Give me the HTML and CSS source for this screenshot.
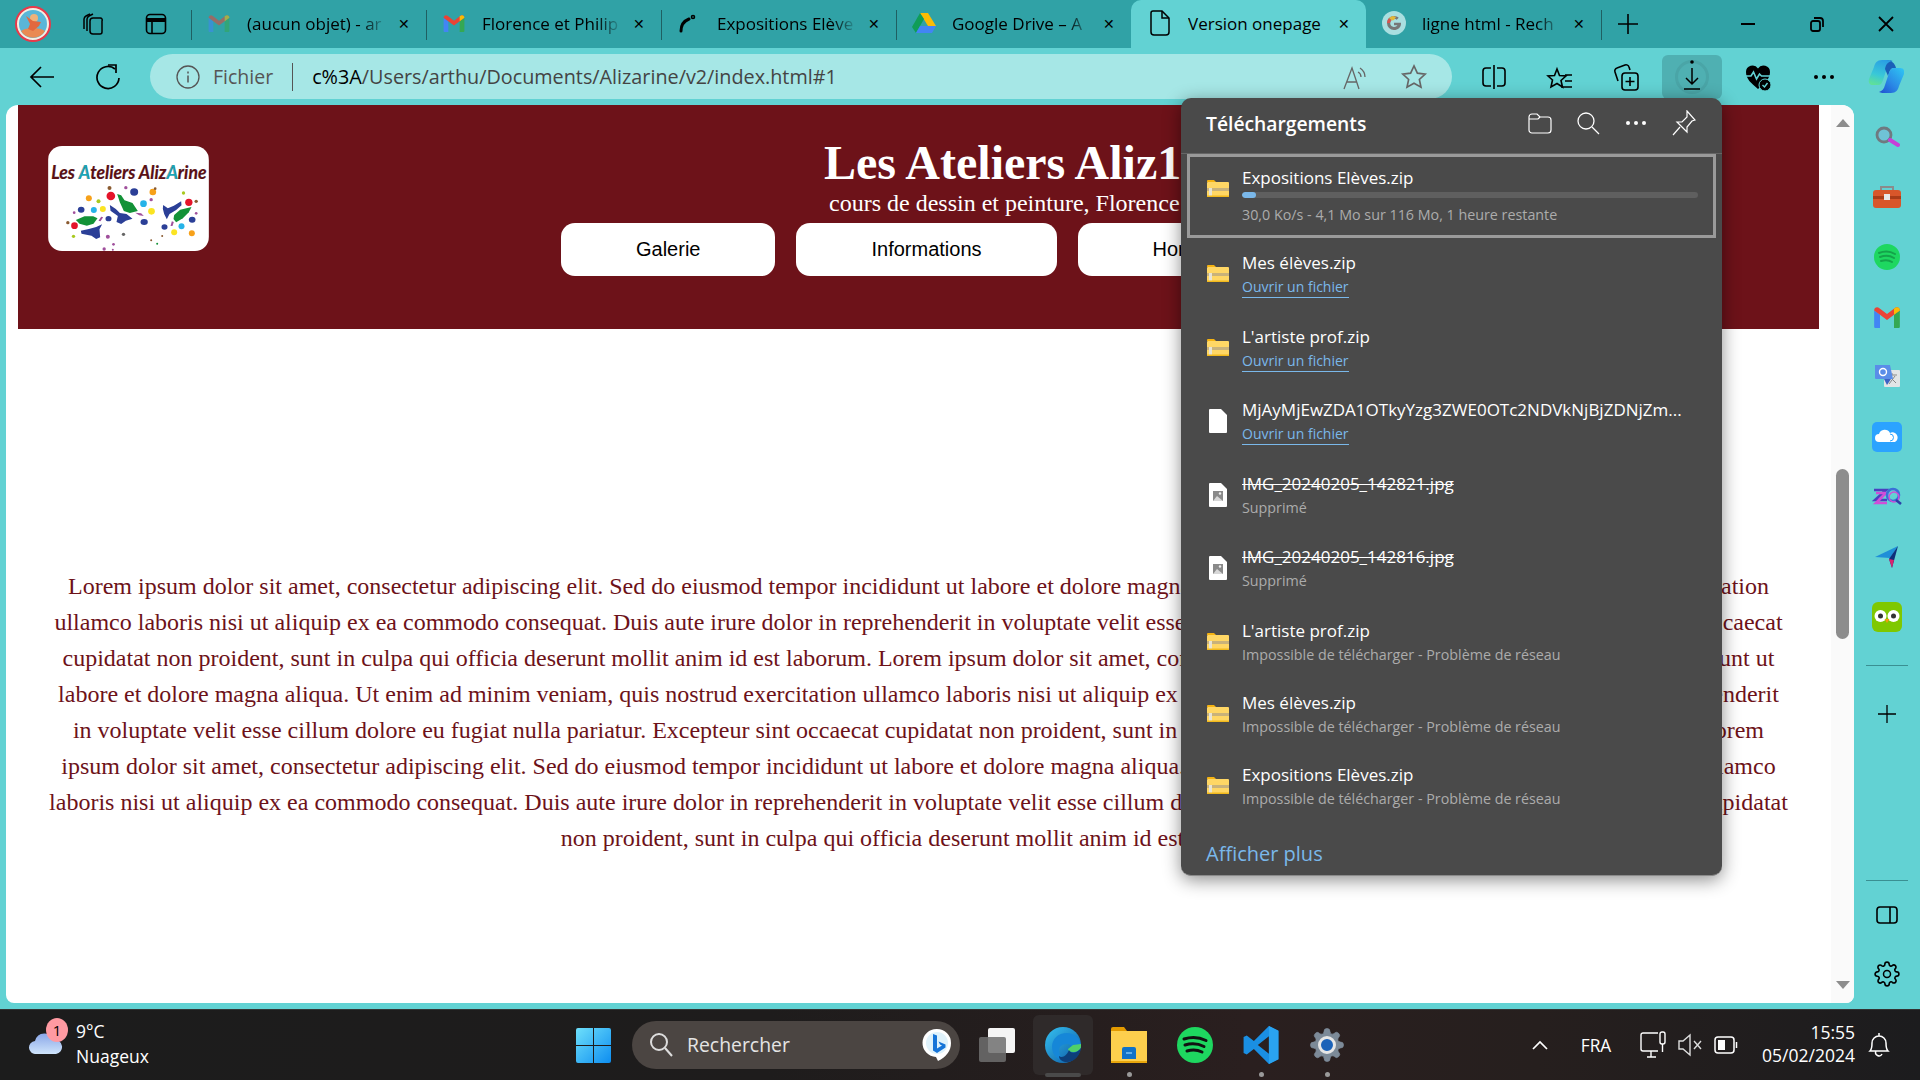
FILE: index.html
```html
<!DOCTYPE html>
<html lang="fr">
<head>
<meta charset="utf-8">
<title>Version onepage</title>
<link rel="stylesheet" href="styles.css">
</head>
<body>
<svg class="defs" width="0" height="0">
  <defs>
    <symbol id="zip" viewBox="0 0 22 18">
      <path d="M0 2a1 1 0 011-1h6l2 2H0z" fill="#f5b312"/>
      <rect x="0" y="3" width="22" height="15" rx="1" fill="#ffd765"/>
      <rect x="0" y="9" width="22" height="3" fill="#c9b27a"/>
      <rect x="2" y="9" width="3" height="9" fill="#e8e4d4"/>
      <rect x="0" y="16.5" width="22" height="1.5" fill="#f2b91c"/>
    </symbol>
    <symbol id="imgfile" viewBox="0 0 18 24">
      <path d="M1 0h11l6 6v17a1 1 0 01-1 1H1a1 1 0 01-1-1V1a1 1 0 011-1z" fill="#fff"/>
      <rect x="4" y="8" width="10" height="10" fill="#8a8a8a"/>
      <path d="M4 18l4-5 6 5z" fill="#d8d8d8"/>
      <circle cx="11" cy="10.5" r="1.2" fill="#eee"/>
    </symbol>
    <symbol id="gmail" viewBox="0 0 24 18">
      <path d="M1 18V3l5 3.5V18H2a1 1 0 01-1-1z" fill="#4285f4"/>
      <path d="M23 18V3l-5 3.5V18h4a1 1 0 001-1z" fill="#34a853"/>
      <path d="M1 3c0-2.500 2.500-3.500 4.500-2L12 6l6.500-5c2-1.500 4.500-.5 4.500 2l-5 3.700-6 4.500-6-4.500z" fill="#ea4335"/>
      <path d="M18 6.700L23 3c0-2.500-2.500-3.500-4.500-2L18 1.400z" fill="#fbbc04"/>
    </symbol>
    <symbol id="gear" viewBox="0 0 24 24">
      <path d="M19.400 15a1.650 1.650 0 00.33 1.820l.06.06a2 2 0 010 2.830 2 2 0 01-2.830 0l-.06-.06a1.650 1.650 0 00-1.820-.33 1.650 1.650 0 00-1 1.510V21a2 2 0 01-2 2 2 2 0 01-2-2v-.09A1.650 1.650 0 009 19.400a1.650 1.650 0 00-1.820.33l-.06.06a2 2 0 01-2.830 0 2 2 0 010-2.830l.06-.06a1.650 1.650 0 00.33-1.820 1.650 1.650 0 00-1.510-1H3a2 2 0 01-2-2 2 2 0 012-2h.09A1.650 1.650 0 004.600 9a1.650 1.650 0 00-.33-1.820l-.06-.06a2 2 0 010-2.830 2 2 0 012.830 0l.06.06a1.650 1.650 0 001.820.33H9a1.650 1.650 0 001-1.510V3a2 2 0 012-2 2 2 0 012 2v.09a1.650 1.650 0 001 1.510 1.650 1.650 0 001.820-.33l.06-.06a2 2 0 012.830 0 2 2 0 010 2.830l-.06.06a1.650 1.650 0 00-.33 1.820V9a1.650 1.650 0 001.510 1H21a2 2 0 012 2 2 2 0 01-2 2h-.09a1.650 1.650 0 00-1.510 1z"/>
    </symbol>
    <linearGradient id="cop1" x1="0" y1="1" x2="1" y2="0"><stop offset="0" stop-color="#1f4fd0"/><stop offset=".45" stop-color="#2a8ae6"/><stop offset="1" stop-color="#2fc8f4"/></linearGradient>
    <linearGradient id="cop2" x1=".6" y1="0" x2=".3" y2="1"><stop offset="0" stop-color="#2a9fe4"/><stop offset=".6" stop-color="#39c8d8"/><stop offset="1" stop-color="#5fe09a"/></linearGradient>
    <linearGradient id="edge1" x1="0" y1="0" x2="1" y2="1"><stop offset="0" stop-color="#35c1f1"/><stop offset="1" stop-color="#0c59a4"/></linearGradient>
    <linearGradient id="win1" x1="0" y1="0" x2="1" y2="1"><stop offset="0" stop-color="#6ee0fb"/><stop offset="1" stop-color="#0d8df0"/></linearGradient>
    <linearGradient id="cloud1" x1="0" y1="0" x2="0" y2="1"><stop offset="0" stop-color="#8aa7e8"/><stop offset="1" stop-color="#cfe4fb"/></linearGradient>
  </defs>
</svg>

<header class="tabstrip">
  <div class="strip-left">
    <svg class="avatar" viewBox="0 0 36 36"><circle cx="18" cy="18" r="17" fill="#f2f0e4" stroke="#e8394a" stroke-width="2"/><circle cx="18" cy="18" r="14" fill="#59b6d8"/><path d="M6 25c5-4 19-4 24 0a14 14 0 01-24 0z" fill="#e98a52"/><circle cx="19" cy="12" r="4" fill="#f0b27a"/><path d="M11 10l7 5 8 1-2 4-6 5-5-2 2-5z" fill="#e2683f"/></svg>
    <button class="icon-btn dark"><svg viewBox="0 0 28 28" width="28" height="28" fill="none" stroke="#000" stroke-width="1.500"><path d="M5 19V9a4 4 0 012-3l4-2"/><path d="M8 21V9a4 4 0 012-3l4-2"/><path d="M12 12a3 3 0 013-3h7a2 2 0 012 3v11a2 2 0 01-2 2h-7a3 3 0 01-3-3z" transform="translate(-1 -1)"/></svg></button>
    <button class="icon-btn dark"><svg viewBox="0 0 24 24" width="24" height="24" fill="none" stroke="#000" stroke-width="1.600"><rect x="2.500" y="2.500" width="19" height="19" rx="3.500"/><path d="M2.500 8h19" stroke-width="4"/><path d="M8 8v13.500"/></svg></button>
  </div>
  <div class="tab">
    <svg class="fav faded" width="22" height="17"><use href="#gmail"/></svg>
    <span class="tab-title">(aucun objet) - ar</span><span class="tab-x">✕</span>
  </div>
  <div class="tab">
    <svg class="fav" width="22" height="17"><use href="#gmail"/></svg>
    <span class="tab-title">Florence et Philip</span><span class="tab-x">✕</span>
  </div>
  <div class="tab">
    <svg class="fav" width="22" height="22" viewBox="0 0 22 22" fill="none" stroke="#000" stroke-width="3" stroke-linecap="round"><path d="M3 19c0-6 3-10 8-12"/><circle cx="15" cy="5" r=".8"/></svg>
    <span class="tab-title">Expositions Elève</span><span class="tab-x">✕</span>
  </div>
  <div class="tab">
    <svg class="fav" width="24" height="22" viewBox="0 0 24 22"><path d="M8 1h8l8 13h-8z" fill="#fbbc04"/><path d="M8 1L0 15l4 6 8-14z" fill="#0f9d58"/><path d="M4 21h16l4-7H8z" fill="#4285f4"/></svg>
    <span class="tab-title">Google Drive – A</span><span class="tab-x">✕</span>
  </div>
  <div class="tab active">
    <svg class="fav" width="20" height="26" viewBox="0 0 20 26" fill="none" stroke="#000" stroke-width="1.500"><path d="M3 1h9l7 7v14a3 3 0 01-3 3H4a3 3 0 01-3-3V3a2 2 0 012-2z"/><path d="M12 1v7h7"/></svg>
    <span class="tab-title">Version onepage</span><span class="tab-x">✕</span>
  </div>
  <div class="tab next">
    <svg class="fav" width="24" height="24" viewBox="0 0 24 24"><circle cx="12" cy="12" r="12" fill="#a9dfe0"/><path d="M19 12.500c0 4-3 6.500-7 6.500a7 7 0 010-14c2 0 3.500.7 4.700 1.800l-2 2a4 4 0 00-6.500 3.200 4 4 0 007.300 2.200H12v-2.500h7z" fill="#777"/><path d="M5 12a7 7 0 012-5l2.500 2.500A4 4 0 008 12z" fill="#d9534f"/><path d="M7 7a7 7 0 014-2l3 1-2 3-2 .5z" fill="#e2b93b"/></svg>
    <span class="tab-title">ligne html - Rech</span><span class="tab-x">✕</span>
  </div>
  <div class="strip-end">
    <button class="plus" aria-label="Nouvel onglet"><svg viewBox="0 0 24 24" width="24" height="24" stroke="#000" stroke-width="1.600"><path d="M12 2v20M2 12h20"/></svg></button>
  </div>
  <div class="win-btns">
    <button class="win-btn"><svg width="16" height="16" viewBox="0 0 16 16" stroke="#000" stroke-width="2"><path d="M1 8h14"/></svg></button>
    <button class="win-btn"><svg width="18" height="18" viewBox="0 0 18 18" fill="none" stroke="#000" stroke-width="1.800"><rect x="3" y="6" width="9" height="10" rx="2"/><path d="M6 3h6a3 3 0 013 3v6"/></svg></button>
    <button class="win-btn"><svg width="18" height="18" viewBox="0 0 18 18" stroke="#000" stroke-width="1.800"><path d="M2 2l14 14M16 2L2 16"/></svg></button>
  </div>
</header>

<nav class="toolbar">
  <button class="tb-btn"><svg width="26" height="24" viewBox="0 0 26 24" fill="none" stroke="#000" stroke-width="1.700"><path d="M25 12H2M12 2L2 12l10 10"/></svg></button>
  <button class="tb-btn"><svg width="26" height="26" viewBox="0 0 26 26" fill="none" stroke="#000" stroke-width="1.700"><path d="M20 5a11 11 0 10 4 9"/><path d="M13 1h8v8"/></svg></button>
  <div class="address">
    <svg class="addr-info" width="24" height="24" viewBox="0 0 24 24" fill="none" stroke="#555" stroke-width="1.300"><circle cx="12" cy="12" r="11"/><path d="M12 10.500v7M12 6.500v2" stroke-width="1.500"/></svg>
    <span class="addr-scheme">Fichier</span>
    <span class="addr-sep"></span>
    <span class="addr-url"><b>c%3A</b>/Users/arthu/Documents/Alizarine/v2/index.html#1</span>
    <svg class="addr-read" width="28" height="28" viewBox="0 0 28 28" fill="none" stroke="#666" stroke-width="1.300"><path d="M3 26L11 5l7 21M6 19h10"/><path d="M17 9c2 1 3 3 3 5M19 5c3 2 5 5 5 9"/></svg>
    <svg class="addr-star" width="28" height="28" viewBox="0 0 24 24" fill="none" stroke="#666" stroke-width="1.400"><path d="M12 2.500l2.900 6.200 6.700.8-5 4.600 1.400 6.700-6-3.400-6 3.400 1.400-6.700-5-4.600 6.700-.8z"/></svg>
  </div>
  <button class="tb-btn first"><svg width="26" height="26" viewBox="0 0 26 26" fill="none" stroke="#000" stroke-width="1.600"><path d="M10 4H5a3 3 0 00-3 3v12a3 3 0 003 3h5M16 4h5a3 3 0 013 3v12a3 3 0 01-3 3h-5M13 1v24"/></svg></button>
  <button class="tb-btn"><svg width="28" height="28" viewBox="0 0 28 28" fill="none" stroke="#000" stroke-width="1.600"><path d="M11 2l2.500 6.500 6.500.5-5 4.500 1.500 6.500-5.500-3.500L5 20l1.500-7L2 9l6.500-.5z" transform="translate(0 4)"/><path d="M19 12h7M19 18h7M15 24h11"/></svg></button>
  <button class="tb-btn"><svg width="28" height="30" viewBox="0 0 28 30" fill="none" stroke="#000" stroke-width="1.600"><path d="M6 19l-3-9a3 3 0 012-4l8-3a3 3 0 014 2l1 3"/><rect x="10" y="11" width="16" height="17" rx="3"/><path d="M18 15v9M13.500 19.500h9"/></svg></button>
  <button class="tb-btn dl"><svg width="36" height="36" viewBox="0 0 36 36" fill="none"><circle cx="18" cy="18" r="15.500" stroke="#4aa5a7" stroke-width="3"/><circle cx="18" cy="3" r="1.800" fill="#000"/><path d="M18 9v16M12 19l6 6 6-6M10 30h16" stroke="#000" stroke-width="1.500"/></svg></button>
  <button class="tb-btn"><svg width="28" height="30" viewBox="0 0 28 30"><path d="M14 27C7 21 2 17 2 10a6.500 6.500 0 0112-3.500A6.500 6.500 0 0126 10c0 7-5 11-12 17z"/><path d="M0 14h7l2.500-4 3 7 3-5 2 2h10" fill="none" stroke="#62d2d3" stroke-width="1.600"/><circle cx="21" cy="23" r="6" fill="#000" stroke="#62d2d3"/><path d="M18.500 23l2 2 3-4" fill="none" stroke="#62d2d3" stroke-width="1.400"/></svg></button>
  <button class="tb-btn"><span class="dots"><i></i><i></i><i></i></span></button>
  <button class="tb-btn copilot"><svg width="36" height="33" viewBox="0 0 36 33"><path d="M18 0H14C9 0 7 3 6 7L1 19C0 23 2 25 5 25H10C13 25 14 23 15 20L19 8C20 4 22 2 25 1 23 0 21 0 18 0Z" fill="url(#cop2)"/><path d="M18 0C23 0 27 3 28 8H26C23 8 22 10 21 13L20 16 17 9C18 4 20 2 24 1 22 .3 20 0 18 0Z" fill="#1a5fb8"/><path d="M18 33H23C28 33 30 30 31 26L36 14C37 10 35 8 32 8H26C23 8 22 10 21 13L17 25C16 29 14 31 11 32 13 33 15 33 18 33Z" fill="url(#cop1)"/></svg></button>
</nav>

<div class="main">
  <section class="page">
    <div class="page-body">
      <div class="site-head">
        <svg class="logo" viewBox="145 138 482 315">
          <rect x="145" y="138" width="482" height="315" fill="#fff"/>
          <text x="154" y="237" class="logo-text" textLength="466" lengthAdjust="spacingAndGlyphs">Les <tspan fill="#18a7b8">A</tspan>teliers Aliz<tspan fill="#18a7b8">A</tspan>rine</text>
          <g fill="#2b3f97">
            <path d="M330 315l18 12 12 12 20 3 18 14-20 6-14 10-14-6 4-18-22-16z"/>
            <path d="M490 315l14 10 18-8 22-13 1 12-16 14-20 12-8 16-8-16-4-16z"/>
            <path d="M243 392l24-5 22-6 18-8-8 15 2 24-12 5-14-10-30-6z"/>
            <ellipse cx="403" cy="276" rx="12" ry="11"/><ellipse cx="244" cy="329" rx="10" ry="9"/><ellipse cx="326" cy="356" rx="9" ry="8"/><ellipse cx="433" cy="366" rx="11" ry="9"/><ellipse cx="577" cy="359" rx="10" ry="9"/><ellipse cx="494" cy="381" rx="9" ry="8"/>
          </g>
          <g fill="#139237">
            <path d="M352 282l12 4 10 15 24 8 16 24-24 6-18-6-12-26z"/>
            <path d="M228 360l26-11 26 0 13 6-12 16-20 6-22-6z"/>
            <path d="M523 345l18-16 34-8-8 16-18 18-20 12-8-10z"/>
          </g>
          <g fill="#e4142a"><circle cx="333" cy="288" r="13"/><circle cx="224" cy="377" r="10"/><circle cx="567" cy="307" r="11"/></g>
          <g fill="#f7a11a"><circle cx="267" cy="295" r="9"/><circle cx="459" cy="276" r="10"/><circle cx="576" cy="400" r="9"/></g>
          <g fill="#27b3e8"><circle cx="282" cy="330" r="9"/><circle cx="431" cy="311" r="10"/><circle cx="545" cy="379" r="9"/></g>
          <g fill="#fbe422"><circle cx="309" cy="327" r="9"/><circle cx="455" cy="334" r="10"/><circle cx="523" cy="397" r="9"/></g>
          <g fill="#a8c91e"><circle cx="296" cy="304" r="6"/><circle cx="551" cy="279" r="5"/><circle cx="221" cy="409" r="5"/></g>
          <g fill="#a0509c"><circle cx="378" cy="263" r="5"/><circle cx="454" cy="299" r="5"/><circle cx="223" cy="338" r="4"/><circle cx="589" cy="340" r="4"/><circle cx="324" cy="410" r="6"/><circle cx="313" cy="447" r="5"/><circle cx="341" cy="433" r="4"/><circle cx="339" cy="449" r="3"/><path d="M296 362l8-12 6 2-8 12zM406 338l18 2 8 8-14-2zM512 378l4-14 6 2-4 12z"/></g>
          <g fill="#8a5a30"><circle cx="329" cy="264" r="6"/><circle cx="204" cy="368" r="5"/><circle cx="589" cy="304" r="5"/><circle cx="466" cy="266" r="4"/><circle cx="454" cy="421" r="3"/><circle cx="487" cy="408" r="3"/></g>
          <circle cx="371" cy="403" r="5" fill="#666"/><circle cx="472" cy="431" r="3" fill="#139237"/>
        </svg>
        <div class="head-col">
          <h1 class="site-title">Les Ateliers Aliz1</h1>
          <p class="site-sub">cours de dessin et peinture, Florence</p>
          <div class="site-nav">
            <a class="nav-btn">Galerie</a>
            <a class="nav-btn">Informations</a>
            <a class="nav-btn">Horaires</a>
          </div>
        </div>
      </div>
      <p class="lorem">Lorem ipsum dolor sit amet, consectetur adipiscing elit. Sed do eiusmod tempor incididunt ut labore et dolore magna aliqua. Ut enim ad minim veniam, quis nostrud exercitation ullamco laboris nisi ut aliquip ex ea commodo consequat. Duis aute irure dolor in reprehenderit in voluptate velit esse cillum dolore eu fugiat nulla pariatur. Excepteur sint occaecat cupidatat non proident, sunt in culpa qui officia deserunt mollit anim id est laborum. Lorem ipsum dolor sit amet, consectetur adipiscing elit. Sed do eiusmod tempor incididunt ut labore et dolore magna aliqua. Ut enim ad minim veniam, quis nostrud exercitation ullamco laboris nisi ut aliquip ex ea commodo consequat. Duis aute irure dolor in reprehenderit in voluptate velit esse cillum dolore eu fugiat nulla pariatur. Excepteur sint occaecat cupidatat non proident, sunt in culpa qui officia deserunt mollit anim id est laborum. Lorem ipsum dolor sit amet, consectetur adipiscing elit. Sed do eiusmod tempor incididunt ut labore et dolore magna aliqua. Ut enim ad minim veniam, quis nostrud exercitation ullamco laboris nisi ut aliquip ex ea commodo consequat. Duis aute irure dolor in reprehenderit in voluptate velit esse cillum dolore eu fugiat nulla pariatur. Excepteur sint occaecat cupidatat non proident, sunt in culpa qui officia deserunt mollit anim id est laborum.</p>
    </div>
    <div class="scrollbar">
      <span class="arrow up"></span>
      <span class="thumb"></span>
      <span class="arrow down"></span>
    </div>
  </section>

  <aside class="sidebar">
    <div class="side-icon"><svg width="26" height="22" viewBox="0 0 26 22"><circle cx="10" cy="9" r="7" fill="#6fc3d6" stroke="#6f7a80" stroke-width="2.800"/><path d="M16 14l8 5" stroke="#c73fd8" stroke-width="4" stroke-linecap="round"/></svg></div>
    <div class="side-icon"><svg width="30" height="26" viewBox="0 0 30 26"><path d="M9 7V3h12v4" fill="none" stroke="#8b8b8b" stroke-width="2"/><rect x="1" y="6" width="28" height="18" rx="3" fill="#d8562a"/><rect x="1" y="12" width="28" height="3" fill="#a93c18"/><rect x="12" y="10" width="6" height="6" fill="#e8e8e8"/></svg></div>
    <div class="side-icon"><svg width="26" height="26" viewBox="0 0 26 26" fill="none"><circle cx="13" cy="13" r="13" fill="#1ed760"/><path d="M5 9c5-2 11-2 16 1M6 13c4-1.500 10-1.500 14 1M7 17c4-1 8-1 11 1" stroke="#14a34a" stroke-width="2" stroke-linecap="round"/></svg></div>
    <div class="side-icon"><svg width="28" height="21"><use href="#gmail"/></svg></div>
    <div class="side-icon"><svg width="26" height="26" viewBox="0 0 26 26"><rect x="10" y="6" width="16" height="17" rx="1" fill="#e2e5e6"/><path d="M14 11h9M18 9v2M15 20l6-8M16 13l6 6" stroke="#888" stroke-width="1" fill="none"/><path d="M1 1h15l3 14H2a1 1 0 01-1-1z" fill="#5a8de8"/><path d="M10 15l3 6 4-6z" fill="#3c62c4"/><circle cx="9" cy="8" r="3.500" fill="none" stroke="#fff" stroke-width="1.400"/></svg></div>
    <div class="side-icon"><svg width="30" height="30" viewBox="0 0 30 30"><rect width="30" height="30" rx="5" fill="#2ba3ff"/><path d="M7 20a4 4 0 010-8 6 6 0 0111-1 4.500 4.500 0 015 9z" fill="#fff"/><path d="M18 12a3.500 3.500 0 010 7" fill="none" stroke="#2ba3ff" stroke-width="1"/></svg></div>
    <div class="side-icon"><svg width="30" height="20" viewBox="0 0 30 20" fill="none" stroke-width="2.600"><path d="M2 3h12L3 13h12" stroke="#4a3fc0"/><path d="M4 6h10L4 16h11" stroke="#d04ed8"/><circle cx="21" cy="8" r="6" stroke="#3a6fd8"/><circle cx="22" cy="10" r="5" stroke="#d04ed8" stroke-width="1.400"/><path d="M24 13l5 4" stroke="#2b3fa8"/></svg></div>
    <div class="side-icon"><svg width="24" height="24" viewBox="0 0 24 24"><path d="M0 12l23-11-8 12z" fill="#1f8fd8"/><path d="M23 1l-6 22-3-9z" fill="#0f2f7a"/><path d="M14 14l3 9 2-8z" fill="#d8246f"/></svg></div>
    <div class="side-icon"><svg width="30" height="30" viewBox="0 0 30 30"><rect width="30" height="30" rx="6" fill="#7fc800"/><circle cx="8.500" cy="14" r="6" fill="#fff"/><circle cx="21.500" cy="14" r="6" fill="#fff"/><circle cx="8.500" cy="14" r="2.500" fill="#333"/><circle cx="21.500" cy="14" r="2.500" fill="#333"/><path d="M12.500 17h5L15 21z" fill="#f39c12"/></svg></div>
    <span class="side-sep"></span>
    <div class="side-add"><svg width="20" height="20" viewBox="0 0 20 20" stroke="#000" stroke-width="1.300"><path d="M10 1v18M1 10h18"/></svg></div>
    <div class="side-bottom">
      <span class="side-sep"></span>
      <div class="side-tool"><svg width="22" height="18" viewBox="0 0 22 18" fill="none" stroke="#000" stroke-width="1.600"><rect x="1" y="1" width="20" height="16" rx="3"/><path d="M14 1v16"/></svg></div>
      <div class="side-tool"><svg width="26" height="26" fill="none" stroke="#000" stroke-width="1.500"><use href="#gear"/><circle cx="13" cy="13" r="3.500"/></svg></div>
    </div>
  </aside>
</div>

<footer class="taskbar">
  <div class="weather">
    <svg class="cloud" width="36" height="24" viewBox="0 0 36 24"><path d="M8 24a6.500 6.500 0 01-1-13 10 10 0 0119-1 7 7 0 012 14z" fill="url(#cloud1)"/></svg>
    <span class="badge">1</span>
    <div class="weather-text"><span class="temp">9°C</span><span class="cond">Nuageux</span></div>
  </div>
  <svg class="winlogo" width="35" height="35" viewBox="0 0 35 35" fill="url(#win1)"><path d="M0 2a2 2 0 012-2h15v17H0zM18 0h15a2 2 0 012 2v15H18zM0 18h17v17H2a2 2 0 01-2-2zM18 18h17v15a2 2 0 01-2 2H18z"/></svg>
  <div class="search">
    <svg width="24" height="26" viewBox="0 0 24 26" fill="none" stroke="#ddd" stroke-width="2"><circle cx="10" cy="10" r="8"/><path d="M16 16l7 8"/></svg>
    <span class="search-text">Rechercher</span>
    <svg class="bing" width="30" height="34" viewBox="0 0 30 34"><path d="M15 1a14 14 0 0114 14c0 8-5 14-13 18l-2-4A14 14 0 0115 1z" fill="#fff"/><circle cx="15" cy="15" r="11" fill="#dff2fb"/><path d="M11 6l4 1.500v13l5-3-2-1-1.500-3 7 3v3L15 25l-4-2.500z" fill="#1674d8"/></svg>
  </div>
  <div class="task-icons">
    <div class="task-icon"><svg width="36" height="34" viewBox="0 0 36 34"><rect x="9" y="0" width="27" height="25" rx="2" fill="#f5f5f5"/><rect x="0" y="9" width="27" height="25" rx="2" fill="#6e6e6e" opacity=".85"/></svg></div>
    <div class="task-icon on"><svg width="36" height="38" viewBox="0 0 36 38"><circle cx="18" cy="19" r="18" fill="url(#edge1)"/><path d="M36 21c0-9-7-14-14-14C13 7 7 13 7 21c0 9 8 15 15 14-5-2-8-6-8-11 0-3 3-6 8-6 3 0 5 2 5 4h9z" fill="#1687d8"/><path d="M36 20c0 4-4 6-8 6-3 0-5-1-5-3l5-4 8-1z" fill="#4fd16a"/><path d="M24 24c2 4 7 4 12-2-1 8-7 14-14 14-4 0-8-2-8-6 3 2 7 1 10-6z" fill="#0d3f7a"/></svg><span class="ind wide"></span></div>
    <div class="task-icon"><svg width="36" height="36" viewBox="0 0 36 36"><path d="M0 2a2 2 0 012-2h11l3 4H0z" fill="#e39a00"/><path d="M0 4h36v32H0z" fill="#fdcf4d"/><path d="M11 22a2 2 0 012-2h10a2 2 0 012 2v10H11z" fill="#0f72c9"/><path d="M15 26h6" stroke="#7cc4f5" stroke-width="1.500"/><path d="M0 34h36v2H0z" fill="#e8a60c"/></svg><span class="ind"></span></div>
    <div class="task-icon"><svg width="36" height="36" viewBox="0 0 36 36" fill="none"><circle cx="18" cy="18" r="18" fill="#1ed760"/><path d="M7 12c8-2.500 15-2 22 1.500M8 18c7-2 13-1.500 19 1.500M10 24c5-1.500 11-1 15 1" stroke="#111" stroke-width="3" stroke-linecap="round"/></svg></div>
    <div class="task-icon"><svg width="38" height="38" viewBox="0 0 24 24"><path d="M17 0L7.500 9.500 3 6 1 7v10l2 1 4.500-3.500L17 24l6-3V3zM17 6.500v11L10 12z" fill="#1a8fe3" fill-rule="evenodd"/><path d="M17 0l6 3v18l-6 3z" fill="#2aa3f0"/></svg><span class="ind"></span></div>
    <div class="task-icon"><svg width="36" height="36" fill="#7c8a98" stroke="#7c8a98" stroke-width=".5"><use href="#gear"/></svg><svg class="gear-core" width="18" height="18" viewBox="0 0 18 18"><circle cx="9" cy="9" r="7.500" fill="#1b62b8" stroke="#e6e6e6" stroke-width="3"/></svg><span class="ind"></span></div>
  </div>
  <div class="tray">
    <svg class="tray-chev" width="16" height="10" viewBox="0 0 16 10" fill="none" stroke="#fff" stroke-width="1.700"><path d="M1 9l7-7 7 7"/></svg>
    <span class="tray-lang">FRA</span>
    <svg class="tray-net" width="26" height="28" viewBox="0 0 26 28" fill="none" stroke="#fff" stroke-width="1.400"><path d="M18 2H3a2 2 0 00-2 2v14a2 2 0 002 2h15M7 26h9M11 20v6"/><rect x="20" y="1" width="5" height="12" rx="2"/><path d="M22.500 13v8"/></svg>
    <svg class="tray-vol" width="24" height="24" viewBox="0 0 24 24" fill="none" stroke="#ddd" stroke-width="1.400"><path d="M1 8h4l7-6v20l-7-6H1z"/><path d="M16 8l7 8M23 8l-7 8"/></svg>
    <svg class="tray-bat" width="24" height="20" viewBox="0 0 24 20" fill="none" stroke="#fff" stroke-width="1.500"><rect x="1" y="2" width="19" height="16" rx="3"/><rect x="4" y="5" width="7" height="10" fill="#fff" stroke="none"/><path d="M22.500 7v6"/></svg>
    <div class="clock"><span>15:55</span><span>05/02/2024</span></div>
    <svg class="tray-bell" width="22" height="26" viewBox="0 0 22 26" fill="none" stroke="#fff" stroke-width="1.500"><path d="M2 19c2-2 2-4 2-8a7 7 0 0114 0c0 4 0 6 2 8zM8 19a3 3 0 006 3M11 1v3"/></svg>
  </div>
</footer>

<section class="flyout">
  <div class="fly-head">
    <h2 class="fly-title">Téléchargements</h2>
    <div class="fly-tools">
      <svg width="24" height="22" viewBox="0 0 24 22" fill="none" stroke="#fff" stroke-width="1.200"><path d="M1 5a3 3 0 013-3h5l3 3h8a3 3 0 013 3v10a3 3 0 01-3 3H4a3 3 0 01-3-3z"/><path d="M1 7h9l2-2"/></svg>
      <svg width="24" height="24" viewBox="0 0 24 24" fill="none" stroke="#fff" stroke-width="1.300"><circle cx="10" cy="10" r="8"/><path d="M16 16l7 7"/></svg>
      <span class="dots light"><i></i><i></i><i></i></span>
      <svg width="24" height="26" viewBox="0 0 24 26" fill="none" stroke="#fff" stroke-width="1.200"><path d="M15 1l8 9-3 1-5 6 0 5L5 12l5 0 5-5z"/><path d="M8 17l-7 8"/></svg>
    </div>
  </div>
  <div class="fly-list">
    <div class="dl-item current">
      <svg class="dl-icon" width="22" height="18"><use href="#zip"/></svg>
      <div class="dl-text">
        <span class="dl-name">Expositions Elèves.zip</span>
        <span class="dl-bar"><i class="dl-fill"></i></span>
        <span class="dl-sub">30,0 Ko/s - 4,1 Mo sur 116 Mo, 1 heure restante</span>
      </div>
    </div>
    <div class="dl-item">
      <svg class="dl-icon" width="22" height="18"><use href="#zip"/></svg>
      <div class="dl-text"><span class="dl-name">Mes élèves.zip</span><a class="dl-link">Ouvrir un fichier</a></div>
    </div>
    <div class="dl-item">
      <svg class="dl-icon" width="22" height="18"><use href="#zip"/></svg>
      <div class="dl-text"><span class="dl-name">L'artiste prof.zip</span><a class="dl-link">Ouvrir un fichier</a></div>
    </div>
    <div class="dl-item">
      <svg class="dl-icon file" width="18" height="24" viewBox="0 0 18 24"><path d="M1 0h11l6 6v17a1 1 0 01-1 1H1a1 1 0 01-1-1V1a1 1 0 011-1z" fill="#fff"/></svg>
      <div class="dl-text"><span class="dl-name">MjAyMjEwZDA1OTkyYzg3ZWE0OTc2NDVkNjBjZDNjZm...</span><a class="dl-link">Ouvrir un fichier</a></div>
    </div>
    <div class="dl-item">
      <svg class="dl-icon file" width="18" height="24"><use href="#imgfile"/></svg>
      <div class="dl-text"><s class="dl-name">IMG_20240205_142821.jpg</s><span class="dl-sub">Supprimé</span></div>
    </div>
    <div class="dl-item">
      <svg class="dl-icon file" width="18" height="24"><use href="#imgfile"/></svg>
      <div class="dl-text"><s class="dl-name">IMG_20240205_142816.jpg</s><span class="dl-sub">Supprimé</span></div>
    </div>
    <div class="dl-item failed">
      <svg class="dl-icon" width="22" height="18"><use href="#zip"/></svg>
      <div class="dl-text"><span class="dl-name">L'artiste prof.zip</span><span class="dl-sub">Impossible de télécharger - Problème de réseau</span></div>
    </div>
    <div class="dl-item failed">
      <svg class="dl-icon" width="22" height="18"><use href="#zip"/></svg>
      <div class="dl-text"><span class="dl-name">Mes élèves.zip</span><span class="dl-sub">Impossible de télécharger - Problème de réseau</span></div>
    </div>
    <div class="dl-item failed">
      <svg class="dl-icon" width="22" height="18"><use href="#zip"/></svg>
      <div class="dl-text"><span class="dl-name">Expositions Elèves.zip</span><span class="dl-sub">Impossible de télécharger - Problème de réseau</span></div>
    </div>
  </div>
  <a class="fly-more">Afficher plus</a>
</section>
</body>
</html>
```

FILE: styles.css
```css
* { box-sizing: border-box; }
html, body { margin: 0; padding: 0; }
body {
  width: 1920px;
  height: 1080px;
  overflow: hidden;
  position: relative;
  display: flex;
  flex-direction: column;
  background: #62d2d3;
  font-family: "Open Sans", "Noto Sans", sans-serif;
  color: #000;
}
button { border: 0; background: none; padding: 0; display: flex; align-items: center; justify-content: center; }
.defs { position: absolute; }

/* tab strip */
.tabstrip { height: 48px; flex: none; display: flex; background: #30a2a6; }
.strip-left { width: 191px; flex: none; display: flex; align-items: center; padding-left: 15px; }
.avatar { width: 36px; height: 36px; flex: none; }
.icon-btn { width: 28px; height: 28px; flex: none; }
.icon-btn:nth-of-type(1) { margin-left: 28px; }
.icon-btn:nth-of-type(2) { margin-left: 35px; }
.tab {
  width: 235px;
  flex: none;
  display: flex;
  align-items: center;
  padding: 0 15px 2px 16px;
  position: relative;
  font-size: 17px;
}
.tab::before {
  content: "";
  position: absolute;
  left: 0;
  top: 10px;
  height: 30px;
  width: 1px;
  background: #1f5f62;
}
.tab.active { background: #62d2d3; border-radius: 10px 10px 0 0; padding-left: 17px; }
.tab.active::before, .tab.next::before { display: none; }
.fav { flex: none; width: 24px; }
.fav.faded { opacity: .55; }
.tab-title {
  margin-left: 16px;
  width: 140px;
  white-space: nowrap;
  overflow: hidden;
  -webkit-mask-image: linear-gradient(90deg, #000 82%, transparent);
  mask-image: linear-gradient(90deg, #000 82%, transparent);
}
.tab.active .tab-title { -webkit-mask-image: none; mask-image: none; }
.tab-x { margin-left: auto; font-size: 14px; width: 14px; text-align: center; }
.strip-end { width: 60px; flex: none; display: flex; align-items: center; padding-left: 15px; position: relative; }
.strip-end::before { content: ""; position: absolute; left: 0; top: 10px; height: 30px; width: 1px; background: #1f5f62; }
.win-btns { margin-left: auto; display: flex; margin-right: -0.5px; }
.win-btn { width: 69px; height: 48px; }

/* toolbar */
.toolbar { height: 57px; flex: none; display: flex; align-items: center; padding-left: 12px; gap: 6px; background: #62d2d3; }
.tb-btn { width: 60px; height: 44px; flex: none; }
.tb-btn.first { margin-left: 6px; }
.tb-btn.copilot { width: 52px; }
.tb-btn.dl { background: #4fb0b2; border-radius: 6px; }
.address {
  width: 1302px;
  height: 45px;
  margin-left: 6px;
  flex: none;
  display: flex;
  align-items: center;
  padding-left: 26px;
  border-radius: 23px;
  background: #a6e7e6;
  font-size: 19.500px;
  color: #555;
}
.addr-scheme { margin-left: 13px; color: #555; }
.addr-sep { width: 1px; height: 28px; margin-left: 19px; background: #555; }
.addr-url { margin-left: 19px; color: #444; white-space: nowrap; font-size: 19.800px; }
.addr-url b { font-weight: 400; color: #000; }
.addr-read { margin-left: auto; }
.addr-star { margin-left: 31px; margin-right: 24px; }
.dots { display: flex; gap: 4px; justify-content: center; }
.dots i { width: 4px; height: 4px; border-radius: 50%; background: #000; }
.dots.light { width: 24px; }
.dots.light i { background: #fff; }

/* main */
.main { height: 904px; flex: none; display: flex; }
.page {
  width: 1848px;
  height: 898px;
  margin-left: 6px;
  flex: none;
  display: flex;
  background: #fff;
  border-radius: 12px 12px 8px 8px;
  overflow: hidden;
}
.page-body { width: 1825px; flex: none; padding: 0 12px 0 12px; }
.site-head {
  height: 224px;
  display: flex;
  align-items: flex-start;
  padding: 41px 0 0 30px;
  background: #6d1219;
}
.logo { width: 161px; height: 105px; flex: none; border-radius: 14px; }
.logo-text { font: italic 700 54px "Lato", sans-serif; fill: #5b0f14; stroke: #3a0a0e; stroke-width: .6; }
.head-col { margin-left: 352px; margin-top: -12px; display: flex; flex-direction: column; }
.site-title {
  margin: 0 0 0 263px;
  font: 700 48px/58px "Liberation Serif", serif;
  color: #fff;
  white-space: nowrap;
}
.site-sub {
  margin: 0 0 0 268px;
  font: 400 24px/22px "Liberation Serif", serif;
  color: #fff;
  white-space: nowrap;
}
.site-nav { display: flex; gap: 21px; margin-top: 9px; }
.nav-btn {
  height: 53px;
  padding: 0 75px;
  display: flex;
  align-items: center;
  background: #fff;
  border-radius: 14px;
  font: 400 20px "Liberation Sans", sans-serif;
  color: #000;
}
.lorem {
  width: 1742px;
  margin: 239px auto 0;
  font: 400 24px/36px "Liberation Serif", serif;
  color: #6d1219;
  text-align: center;
}
.scrollbar {
  width: 23px;
  flex: none;
  display: flex;
  flex-direction: column;
  align-items: center;
  background: #fafafa;
  padding-top: 14px;
}
.arrow { width: 0; height: 0; border-left: 7px solid transparent; border-right: 7px solid transparent; flex: none; }
.arrow.up { border-bottom: 8px solid #8d8d8d; }
.arrow.down { border-top: 8px solid #8d8d8d; margin-top: 342px; }
.thumb { width: 13px; height: 170px; margin-top: 342px; border-radius: 7px; background: #8d8d8d; flex: none; }

/* sidebar */
.sidebar { width: 66px; flex: none; display: flex; flex-direction: column; align-items: center; padding-top: 2px; }
.side-icon { height: 60px; width: 100%; display: flex; align-items: center; justify-content: center; }
.side-sep { width: 42px; height: 1px; background: #3a8f92; flex: none; }
.sidebar > .side-sep { margin-top: 18px; }
.side-add { height: 20px; margin-top: 38px; }
.side-bottom { margin-top: auto; margin-bottom: 20px; display: flex; flex-direction: column; align-items: center; }
.side-tool { height: 30px; display: flex; align-items: center; }
.side-bottom .side-sep { margin-bottom: 19px; }
.side-tool + .side-tool { margin-top: 29px; }

/* taskbar */
.taskbar {
  height: 71px;
  flex: none;
  display: flex;
  align-items: center;
  background: linear-gradient(90deg, #1c1c1c 0%, #1e1c1c 40%, #2a1f1f 65%, #261f1e 80%, #1c1c1e 100%);
  color: #fff;
  font-size: 17.500px;
  border-top: 1px solid #333;
}
.weather { width: 576px; flex: none; display: flex; align-items: center; padding-left: 28px; position: relative; height: 100%; }
.cloud { flex: none; margin-top: -6px; }
.badge {
  position: absolute;
  left: 46px;
  top: 8px;
  width: 22px;
  height: 24px;
  border-radius: 50%;
  background: #ff9aa2;
  color: #000;
  font-size: 15px;
  display: flex;
  align-items: center;
  justify-content: center;
}
.weather-text { display: flex; flex-direction: column; margin: -3px 0 0 12px; line-height: 25px; }
.winlogo { flex: none; }
.search {
  width: 328px;
  height: 48px;
  margin-left: 21px;
  flex: none;
  display: flex;
  align-items: center;
  padding-left: 17px;
  border-radius: 24px;
  background: #4b4542;
  color: #e4e4e4;
  font-size: 19.400px;
}
.search-text { margin: 0 0 2px 14px; }
.bing { margin-left: auto; margin-right: 8px; }
.task-icons { display: flex; margin-left: 4px; height: 60px; }
.task-icon { width: 66px; display: flex; align-items: center; justify-content: center; position: relative; }
.task-icon.on::before { content: ""; position: absolute; inset: 0 3px; background: #2f2a2a; border-radius: 6px; z-index: 0; }
.task-icon svg { position: relative; z-index: 1; }
.gear-core { position: absolute !important; left: 24px; top: 21px; }
.ind { position: absolute; left: 30.500px; bottom: -2px; width: 5px; height: 5px; border-radius: 50%; background: #9a9a9a; z-index: 1; }
.ind.wide { width: 36px; height: 4px; border-radius: 2px; left: 15px; background: #4a4a4a; }
.tray { margin-left: auto; display: flex; align-items: center; padding-right: 32px; }
.tray-lang { margin-left: 30px; font-size: 17.300px; width: 36px; text-align: center; }
.tray-net { margin-left: 26px; }
.tray-vol { margin-left: 11.500px; }
.tray-bat { margin-left: 12px; }
.clock { width: 119.500px; display: flex; flex-direction: column; align-items: flex-end; line-height: 23px; font-size: 17.500px; margin: -3px 0 0 -2px; white-space: nowrap; }
.tray-bell { margin-left: 13px; margin-right: -2px; }

/* flyout */
.flyout {
  position: absolute;
  left: 1181px;
  top: 98px;
  width: 541px;
  height: 778px;
  background: #4a4a4a;
  border-radius: 10px;
  box-shadow: 0 4px 18px rgba(0,0,0,.45);
  color: #fff;
  overflow: hidden;
  border-bottom: 1px solid #8a8a8a;
}
.fly-head { height: 56px; display: flex; align-items: center; justify-content: space-between; padding: 0 26px 5px 25px; border-bottom: 1px solid #666; }
.fly-title { margin: 0; font-size: 19.300px; font-weight: 600; }
.fly-tools { display: flex; align-items: center; gap: 24px; }
.fly-list { display: flex; flex-direction: column; padding: 0 6px; }
.dl-item { height: 73.500px; display: flex; align-items: flex-start; padding: 13px 0 0 20px; flex: none; }
.dl-item.current { height: 84px; border: 3px solid #9a9a9a; padding: 9px 0 0 17px; }
.dl-item.failed { height: 72px; }
.dl-icon { flex: none; margin-top: 13px; }
.dl-icon.file { margin: 11px 2px 0; }
.dl-text { margin-left: 13px; display: flex; flex-direction: column; align-items: flex-start; flex: 1; min-width: 0; padding-right: 15px; }
.dl-name { font-size: 17px; line-height: 24px; color: #fff; white-space: nowrap; text-decoration-thickness: 1px; }
.dl-sub { font-size: 14.300px; line-height: 24px; color: #acacac; white-space: nowrap; }
.dl-link { font-size: 14px; line-height: 21px; color: #7ab8ea; border-bottom: 1px solid #7ab8ea; margin-top: 1px; white-space: nowrap; }
.dl-bar { display: block; width: 100%; height: 6px; margin-top: 2px; border-radius: 3px; background: #5f5f5f; position: relative; overflow: hidden; flex: none; }
.dl-fill { display: block; width: 14px; height: 100%; background: #7ab8ea; border-radius: 3px; }
.current .dl-sub { margin-top: 5px; }
.fly-more { display: block; margin: 20px 0 0 25px; font-size: 20px; line-height: 24px; color: #7ab8ea; }
```
